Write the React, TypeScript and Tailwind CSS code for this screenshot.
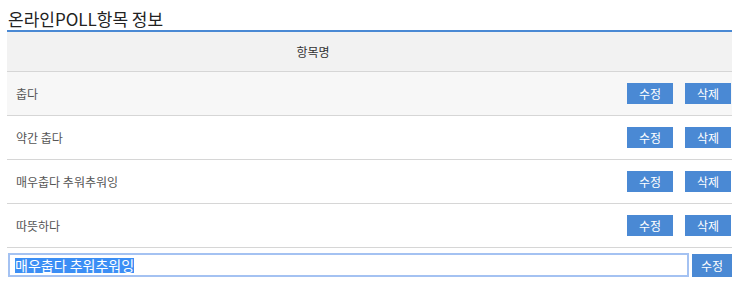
const items = ["춥다", "약간 춥다", "매우춥다 추워추워잉", "따뜻하다"];

function Btn({ label }: { label: string }) {
  return (
    <button className="h-[21px] w-[46px] bg-[#4a89d4] text-[12px] leading-[21px] text-white">
      {label}
    </button>
  );
}

export default function App() {
  return (
    <div className="w-[743px] bg-white pl-[7px] pr-[11px] font-['Noto_Sans_CJK_KR',sans-serif] text-[#555]">
      <h2 className="flex h-[32px] items-end border-b-2 border-[#4a89d4] pb-[1px] pl-[1px] text-[17px] leading-[20px] text-[#222]">
        온라인POLL항목 정보
      </h2>

      <div className="flex h-[40px] border-b border-[#d6d6d6] bg-[#f2f2f2] text-[12px] text-[#333]">
        <div className="flex w-[612px] items-center justify-center">항목명</div>
        <div className="flex-1" />
      </div>

      {items.map((item, i) => (
        <div
          key={item}
          className={`flex h-[44px] items-center border-b border-[#d6d6d6] pl-[9px] pr-[1px] text-[12px] ${
            i === 0 ? "bg-[#f7f7f7]" : "bg-white"
          }`}
        >
          <span className="flex-1">{item}</span>
          <div className="flex gap-[12px]">
            <Btn label="수정" />
            <Btn label="삭제" />
          </div>
        </div>
      ))}

      <div className="mt-[5px] flex items-start gap-[3px] pl-[1px]">
        <div className="flex h-[24px] w-[681px] items-center border-2 border-[#a4c2f2] pl-[5px] text-[14px] leading-[15px] text-black">
          <span className="bg-[#3b8ef5] text-white">매우춥다 추워추워잉</span>
        </div>
        <button className="mt-[1px] h-[23px] w-[40px] bg-[#4a89d4] text-[12px] text-white">수정</button>
      </div>
    </div>
  );
}
